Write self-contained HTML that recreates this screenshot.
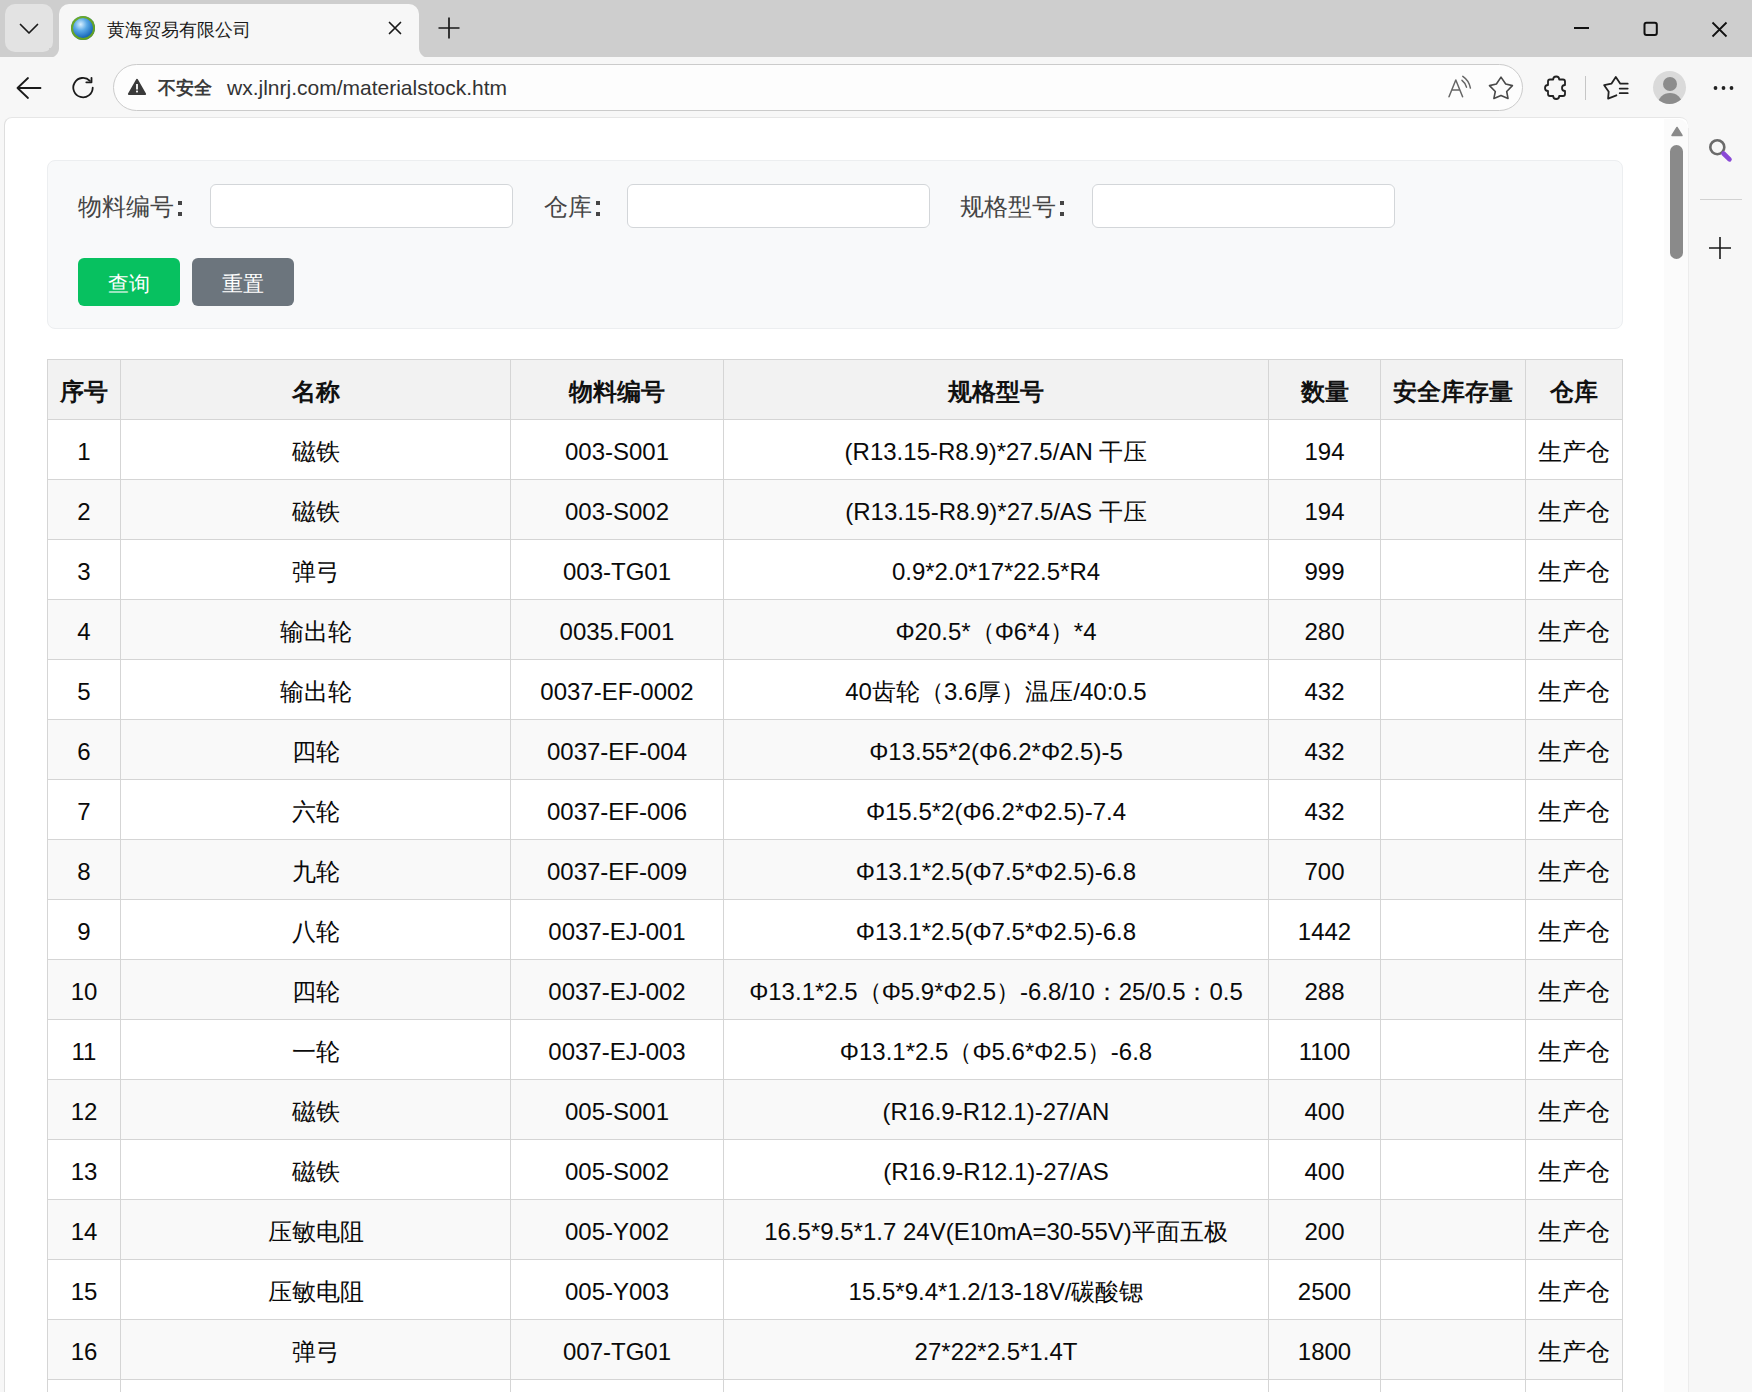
<!DOCTYPE html>
<html><head><meta charset="utf-8">
<style>
*{box-sizing:border-box;margin:0;padding:0}
html,body{width:1752px;height:1392px;overflow:hidden;background:#f7f7f7;font-family:"Liberation Sans",sans-serif;position:relative}
.abs{position:absolute}
#tabstrip{position:absolute;left:0;top:0;width:1752px;height:58px;background:#cecece}
#dd{position:absolute;left:5px;top:4px;width:48px;height:48px;border-radius:10px;background:#e3e3e3}
#tab{position:absolute;left:59px;top:4px;width:360px;height:54px;background:#f7f7f7;border-radius:10px 10px 0 0}
#tab:before,#tab:after{content:"";position:absolute;bottom:0;width:10px;height:10px}
#tab:before{left:-10px;background:radial-gradient(circle at 0 0,#cecece 9.5px,#f7f7f7 10.5px)}
#tab:after{right:-10px;background:radial-gradient(circle at 100% 0,#cecece 9.5px,#f7f7f7 10.5px)}
#favicon{position:absolute;left:71px;top:16px;width:24px;height:24px;border-radius:50%;background:radial-gradient(circle at 40% 35%,#d9f0ff 0,#5aa9e6 30%,#1565b8 65%,#0d3e7a 85%);box-shadow:inset 0 0 0 2px rgba(110,170,20,.9)}
#title{position:absolute;left:107px;top:18px;font-size:18px;color:#1b1b1b;white-space:nowrap;line-height:24px}
#toolbar{position:absolute;left:0;top:57px;width:1752px;height:61px;background:#f7f7f7}
#pill{position:absolute;left:113px;top:64px;width:1410px;height:47px;border-radius:24px;background:#fdfdfd;border:1px solid #cbcbcb}
#insec{position:absolute;left:158px;top:76px;font-size:18px;font-weight:bold;color:#3b3b3b;line-height:24px;white-space:nowrap}
#url{position:absolute;left:227px;top:76px;font-size:21px;color:#333;line-height:24px;white-space:nowrap}
#content{position:absolute;left:4px;top:117px;width:1684px;height:1300px;background:#fff;border-top-left-radius:8px;border-top-right-radius:8px;border-left:1px solid #dedede;border-top:1px solid #e6e6e6}
#sidebar{position:absolute;left:1688px;top:128px;width:64px;height:1274px;background:#f7f7f7;border-left:1px solid #ececec}
#filter{position:absolute;left:47px;top:160px;width:1576px;height:169px;background:#f8f9fa;border:1px solid #eceef0;border-radius:8px}
.lbl{position:absolute;top:192px;font-size:24px;color:#454545;line-height:30px;white-space:nowrap}
.inp{position:absolute;top:184px;width:303px;height:44px;background:#fff;border:1px solid #d3d6d9;border-radius:6px}
.btn{position:absolute;top:258px;width:102px;height:48px;border-radius:6px;color:#fff;font-size:21px;text-align:center;line-height:51px}
.bg{position:absolute}
.dot{position:absolute;top:201px;width:4px;height:15px;background:linear-gradient(#454545 0,#454545 4px,transparent 4px,transparent 11px,#454545 11px)}
.hl{position:absolute;height:1px;background:#d5d5d5}
.vl{position:absolute;width:1px;background:#d5d5d5}
.c{position:absolute;height:60px;line-height:65px;text-align:center;font-size:24px;color:#0a0a0a;white-space:nowrap}
.th{font-weight:bold;color:#111;line-height:66px}
#scroll{position:absolute;left:1664px;top:119px;width:24px;height:1273px;background:#fbfbfb;border-top-right-radius:10px}
#thumb{position:absolute;left:1670px;top:145px;width:13px;height:114px;border-radius:7px;background:#8a8a8a}
</style></head><body>
<div id="tabstrip"></div>
<div id="dd"></div>
<div id="tab"></div>
<div id="favicon"></div>
<div id="title">黄海贸易有限公司</div>
<div id="toolbar"></div>
<div id="pill"></div>
<div id="insec">不安全</div>
<div id="url">wx.jlnrj.com/materialstock.htm</div>
<div class="abs" style="left:1585px;top:76px;width:1px;height:24px;background:#c6c6c6"></div>
<div class="abs" style="left:1653px;top:71px;width:33px;height:33px;border-radius:50%;background:#dadada;overflow:hidden"><div class="abs" style="left:9.5px;top:5.7px;width:14.5px;height:14.5px;border-radius:50%;background:#8c8c8c"></div><div class="abs" style="left:5px;top:21.7px;width:24px;height:22px;border-radius:50%;background:#8c8c8c"></div></div>
<svg class="abs" style="left:0;top:0;z-index:5" width="1752" height="130" viewBox="0 0 1752 130">
<g fill="none" stroke-linecap="round" stroke-linejoin="round">
<path d="M20.5 24.5 L29 33 L37.5 24.5" stroke="#1a1a1a" stroke-width="1.7"/>
<path d="M389.5 22.5 L400.5 33.5 M400.5 22.5 L389.5 33.5" stroke="#1a1a1a" stroke-width="1.7"/>
<path d="M449 17.5 V38.5 M438.5 28 H459.5" stroke="#1a1a1a" stroke-width="1.7" stroke-linecap="butt"/>
<path d="M1574 28 H1589" stroke="#111" stroke-width="2" stroke-linecap="butt"/>
<rect x="1644.5" y="22.7" width="12.3" height="12.3" rx="2" stroke="#111" stroke-width="2"/>
<path d="M1712.5 22.5 L1726.5 36.5 M1726.5 22.5 L1712.5 36.5" stroke="#111" stroke-width="1.8" stroke-linecap="butt"/>
<path d="M28 78 L17.5 88 L28 98 M17.5 88 H40.5" stroke="#1a1a1a" stroke-width="1.8"/>
<path d="M92.7 87.7 A9.7 9.7 0 1 1 89.9 80.8" stroke="#1a1a1a" stroke-width="1.8"/>
<path d="M86.3 82.3 H91.5 V77.8" stroke="#1a1a1a" stroke-width="1.8"/>
<path d="M1449 96.8 L1455.8 80 L1462.6 96.8 M1451.8 90.1 H1459.8" stroke="#666" stroke-width="1.5"/>
<path d="M1462 80.3 Q1465.5 83 1466.5 87.2 M1462.8 76.4 Q1469 80.5 1470.4 88.1" stroke="#666" stroke-width="1.5"/>
<path d="M1501 77.1 L1505.7 84 L1512.4 85.6 L1506.7 91.5 L1508 98.4 L1501 95.4 L1493.9 98.4 L1495.3 91.5 L1489.5 85.6 L1496.4 84 Z" stroke="#4a4a4a" stroke-width="1.6"/>
<path d="M1550 79.5 H1553.2 A3 3 0 0 1 1559.2 79.5 H1563 Q1565 79.5 1565 81.5 V85 A3 3 0 0 0 1565 91 V94 Q1565 96 1563 96 H1559.2 A3 3 0 0 1 1553.2 96 H1550 Q1548 96 1548 94 V91 A3 3 0 0 1 1548 85 V81.5 Q1548 79.5 1550 79.5 Z" stroke="#222" stroke-width="1.8"/>
<path d="M1627.7 83.7 H1620.3 L1615.8 76.9 L1611.4 83.7 L1604.2 85.2 L1608.7 91.7 L1608.1 98.6 L1616.4 95.3 M1619.7 88.6 H1627.7 M1619.7 93.2 H1627.7" stroke="#222" stroke-width="1.8"/>
<circle cx="1715.5" cy="88" r="1.9" fill="#222" stroke="none"/><circle cx="1723.5" cy="88" r="1.9" fill="#222" stroke="none"/><circle cx="1731.5" cy="88" r="1.9" fill="#222" stroke="none"/>
</g>
<path d="M129 94 L137 80 L145 94 Z" fill="#3a3a3a" stroke="#3a3a3a" stroke-width="2.2" stroke-linejoin="round"/>
<rect x="136.1" y="84" width="1.8" height="5.5" fill="#fff"/><rect x="136.1" y="90.6" width="1.8" height="1.8" fill="#fff"/>
</svg>
<div id="content"></div>
<div id="sidebar"></div>
<svg class="abs" style="left:1700px;top:130px" width="40" height="40" viewBox="1700 130 40 40"><circle cx="1717.3" cy="147.2" r="7" fill="none" stroke="#6b6b6b" stroke-width="2.6"/><path d="M1723.5 153.5 L1729.5 159.3" stroke="#8a4ad6" stroke-width="4.6" stroke-linecap="round"/></svg>
<div class="abs" style="left:1700px;top:199px;width:42px;height:1px;background:#d2d2d2"></div>
<svg class="abs" style="left:1706px;top:234px" width="28" height="28" viewBox="0 0 28 28"><path d="M14 3 V25 M3 14 H25" stroke="#1a1a1a" stroke-width="1.6"/></svg>

<div id="filter"></div>
<div class="lbl" style="left:78px">物料编号</div><div class="dot" style="left:178px"></div>
<div class="inp" style="left:210px"></div>
<div class="lbl" style="left:544px">仓库</div><div class="dot" style="left:596px"></div>
<div class="inp" style="left:627px"></div>
<div class="lbl" style="left:960px">规格型号</div><div class="dot" style="left:1060px"></div>
<div class="inp" style="left:1092px"></div>
<div class="btn" style="left:78px;background:#07c160">查询</div>
<div class="btn" style="left:192px;background:#6c757d">重置</div>

<div class="bg" style="left:47px;top:359px;width:1575px;height:60px;background:#f2f2f2"></div>
<div class="bg" style="left:47px;top:419px;width:1575px;height:60px;background:#fff"></div>
<div class="bg" style="left:47px;top:479px;width:1575px;height:60px;background:#f9f9f9"></div>
<div class="bg" style="left:47px;top:539px;width:1575px;height:60px;background:#fff"></div>
<div class="bg" style="left:47px;top:599px;width:1575px;height:60px;background:#f9f9f9"></div>
<div class="bg" style="left:47px;top:659px;width:1575px;height:60px;background:#fff"></div>
<div class="bg" style="left:47px;top:719px;width:1575px;height:60px;background:#f9f9f9"></div>
<div class="bg" style="left:47px;top:779px;width:1575px;height:60px;background:#fff"></div>
<div class="bg" style="left:47px;top:839px;width:1575px;height:60px;background:#f9f9f9"></div>
<div class="bg" style="left:47px;top:899px;width:1575px;height:60px;background:#fff"></div>
<div class="bg" style="left:47px;top:959px;width:1575px;height:60px;background:#f9f9f9"></div>
<div class="bg" style="left:47px;top:1019px;width:1575px;height:60px;background:#fff"></div>
<div class="bg" style="left:47px;top:1079px;width:1575px;height:60px;background:#f9f9f9"></div>
<div class="bg" style="left:47px;top:1139px;width:1575px;height:60px;background:#fff"></div>
<div class="bg" style="left:47px;top:1199px;width:1575px;height:60px;background:#f9f9f9"></div>
<div class="bg" style="left:47px;top:1259px;width:1575px;height:60px;background:#fff"></div>
<div class="bg" style="left:47px;top:1319px;width:1575px;height:60px;background:#f9f9f9"></div>
<div class="bg" style="left:47px;top:1379px;width:1575px;height:60px;background:#fff"></div>
<div class="hl" style="top:359px;left:47px;width:1576px"></div>
<div class="hl" style="top:419px;left:47px;width:1576px"></div>
<div class="hl" style="top:479px;left:47px;width:1576px"></div>
<div class="hl" style="top:539px;left:47px;width:1576px"></div>
<div class="hl" style="top:599px;left:47px;width:1576px"></div>
<div class="hl" style="top:659px;left:47px;width:1576px"></div>
<div class="hl" style="top:719px;left:47px;width:1576px"></div>
<div class="hl" style="top:779px;left:47px;width:1576px"></div>
<div class="hl" style="top:839px;left:47px;width:1576px"></div>
<div class="hl" style="top:899px;left:47px;width:1576px"></div>
<div class="hl" style="top:959px;left:47px;width:1576px"></div>
<div class="hl" style="top:1019px;left:47px;width:1576px"></div>
<div class="hl" style="top:1079px;left:47px;width:1576px"></div>
<div class="hl" style="top:1139px;left:47px;width:1576px"></div>
<div class="hl" style="top:1199px;left:47px;width:1576px"></div>
<div class="hl" style="top:1259px;left:47px;width:1576px"></div>
<div class="hl" style="top:1319px;left:47px;width:1576px"></div>
<div class="hl" style="top:1379px;left:47px;width:1576px"></div>
<div class="vl" style="left:47px;top:359px;height:1033px"></div>
<div class="vl" style="left:120px;top:359px;height:1033px"></div>
<div class="vl" style="left:510px;top:359px;height:1033px"></div>
<div class="vl" style="left:723px;top:359px;height:1033px"></div>
<div class="vl" style="left:1268px;top:359px;height:1033px"></div>
<div class="vl" style="left:1380px;top:359px;height:1033px"></div>
<div class="vl" style="left:1525px;top:359px;height:1033px"></div>
<div class="vl" style="left:1622px;top:359px;height:1033px"></div>
<div class="c th" style="left:48px;top:359px;width:72px">序号</div>
<div class="c th" style="left:121px;top:359px;width:389px">名称</div>
<div class="c th" style="left:511px;top:359px;width:212px">物料编号</div>
<div class="c th" style="left:724px;top:359px;width:544px">规格型号</div>
<div class="c th" style="left:1269px;top:359px;width:111px">数量</div>
<div class="c th" style="left:1381px;top:359px;width:144px">安全库存量</div>
<div class="c th" style="left:1526px;top:359px;width:96px">仓库</div>
<div class="c" style="left:48px;top:419px;width:72px">1</div>
<div class="c" style="left:121px;top:419px;width:389px">磁铁</div>
<div class="c" style="left:511px;top:419px;width:212px">003-S001</div>
<div class="c" style="left:724px;top:419px;width:544px">(R13.15-R8.9)*27.5/AN 干压</div>
<div class="c" style="left:1269px;top:419px;width:111px">194</div>
<div class="c" style="left:1526px;top:419px;width:96px">生产仓</div>
<div class="c" style="left:48px;top:479px;width:72px">2</div>
<div class="c" style="left:121px;top:479px;width:389px">磁铁</div>
<div class="c" style="left:511px;top:479px;width:212px">003-S002</div>
<div class="c" style="left:724px;top:479px;width:544px">(R13.15-R8.9)*27.5/AS 干压</div>
<div class="c" style="left:1269px;top:479px;width:111px">194</div>
<div class="c" style="left:1526px;top:479px;width:96px">生产仓</div>
<div class="c" style="left:48px;top:539px;width:72px">3</div>
<div class="c" style="left:121px;top:539px;width:389px">弹弓</div>
<div class="c" style="left:511px;top:539px;width:212px">003-TG01</div>
<div class="c" style="left:724px;top:539px;width:544px">0.9*2.0*17*22.5*R4</div>
<div class="c" style="left:1269px;top:539px;width:111px">999</div>
<div class="c" style="left:1526px;top:539px;width:96px">生产仓</div>
<div class="c" style="left:48px;top:599px;width:72px">4</div>
<div class="c" style="left:121px;top:599px;width:389px">输出轮</div>
<div class="c" style="left:511px;top:599px;width:212px">0035.F001</div>
<div class="c" style="left:724px;top:599px;width:544px">Φ20.5*（Φ6*4）*4</div>
<div class="c" style="left:1269px;top:599px;width:111px">280</div>
<div class="c" style="left:1526px;top:599px;width:96px">生产仓</div>
<div class="c" style="left:48px;top:659px;width:72px">5</div>
<div class="c" style="left:121px;top:659px;width:389px">输出轮</div>
<div class="c" style="left:511px;top:659px;width:212px">0037-EF-0002</div>
<div class="c" style="left:724px;top:659px;width:544px">40齿轮（3.6厚）温压/40:0.5</div>
<div class="c" style="left:1269px;top:659px;width:111px">432</div>
<div class="c" style="left:1526px;top:659px;width:96px">生产仓</div>
<div class="c" style="left:48px;top:719px;width:72px">6</div>
<div class="c" style="left:121px;top:719px;width:389px">四轮</div>
<div class="c" style="left:511px;top:719px;width:212px">0037-EF-004</div>
<div class="c" style="left:724px;top:719px;width:544px">Φ13.55*2(Φ6.2*Φ2.5)-5</div>
<div class="c" style="left:1269px;top:719px;width:111px">432</div>
<div class="c" style="left:1526px;top:719px;width:96px">生产仓</div>
<div class="c" style="left:48px;top:779px;width:72px">7</div>
<div class="c" style="left:121px;top:779px;width:389px">六轮</div>
<div class="c" style="left:511px;top:779px;width:212px">0037-EF-006</div>
<div class="c" style="left:724px;top:779px;width:544px">Φ15.5*2(Φ6.2*Φ2.5)-7.4</div>
<div class="c" style="left:1269px;top:779px;width:111px">432</div>
<div class="c" style="left:1526px;top:779px;width:96px">生产仓</div>
<div class="c" style="left:48px;top:839px;width:72px">8</div>
<div class="c" style="left:121px;top:839px;width:389px">九轮</div>
<div class="c" style="left:511px;top:839px;width:212px">0037-EF-009</div>
<div class="c" style="left:724px;top:839px;width:544px">Φ13.1*2.5(Φ7.5*Φ2.5)-6.8</div>
<div class="c" style="left:1269px;top:839px;width:111px">700</div>
<div class="c" style="left:1526px;top:839px;width:96px">生产仓</div>
<div class="c" style="left:48px;top:899px;width:72px">9</div>
<div class="c" style="left:121px;top:899px;width:389px">八轮</div>
<div class="c" style="left:511px;top:899px;width:212px">0037-EJ-001</div>
<div class="c" style="left:724px;top:899px;width:544px">Φ13.1*2.5(Φ7.5*Φ2.5)-6.8</div>
<div class="c" style="left:1269px;top:899px;width:111px">1442</div>
<div class="c" style="left:1526px;top:899px;width:96px">生产仓</div>
<div class="c" style="left:48px;top:959px;width:72px">10</div>
<div class="c" style="left:121px;top:959px;width:389px">四轮</div>
<div class="c" style="left:511px;top:959px;width:212px">0037-EJ-002</div>
<div class="c" style="left:724px;top:959px;width:544px">Φ13.1*2.5（Φ5.9*Φ2.5）-6.8/10：25/0.5：0.5</div>
<div class="c" style="left:1269px;top:959px;width:111px">288</div>
<div class="c" style="left:1526px;top:959px;width:96px">生产仓</div>
<div class="c" style="left:48px;top:1019px;width:72px">11</div>
<div class="c" style="left:121px;top:1019px;width:389px">一轮</div>
<div class="c" style="left:511px;top:1019px;width:212px">0037-EJ-003</div>
<div class="c" style="left:724px;top:1019px;width:544px">Φ13.1*2.5（Φ5.6*Φ2.5）-6.8</div>
<div class="c" style="left:1269px;top:1019px;width:111px">1100</div>
<div class="c" style="left:1526px;top:1019px;width:96px">生产仓</div>
<div class="c" style="left:48px;top:1079px;width:72px">12</div>
<div class="c" style="left:121px;top:1079px;width:389px">磁铁</div>
<div class="c" style="left:511px;top:1079px;width:212px">005-S001</div>
<div class="c" style="left:724px;top:1079px;width:544px">(R16.9-R12.1)-27/AN</div>
<div class="c" style="left:1269px;top:1079px;width:111px">400</div>
<div class="c" style="left:1526px;top:1079px;width:96px">生产仓</div>
<div class="c" style="left:48px;top:1139px;width:72px">13</div>
<div class="c" style="left:121px;top:1139px;width:389px">磁铁</div>
<div class="c" style="left:511px;top:1139px;width:212px">005-S002</div>
<div class="c" style="left:724px;top:1139px;width:544px">(R16.9-R12.1)-27/AS</div>
<div class="c" style="left:1269px;top:1139px;width:111px">400</div>
<div class="c" style="left:1526px;top:1139px;width:96px">生产仓</div>
<div class="c" style="left:48px;top:1199px;width:72px">14</div>
<div class="c" style="left:121px;top:1199px;width:389px">压敏电阻</div>
<div class="c" style="left:511px;top:1199px;width:212px">005-Y002</div>
<div class="c" style="left:724px;top:1199px;width:544px">16.5*9.5*1.7 24V(E10mA=30-55V)平面五极</div>
<div class="c" style="left:1269px;top:1199px;width:111px">200</div>
<div class="c" style="left:1526px;top:1199px;width:96px">生产仓</div>
<div class="c" style="left:48px;top:1259px;width:72px">15</div>
<div class="c" style="left:121px;top:1259px;width:389px">压敏电阻</div>
<div class="c" style="left:511px;top:1259px;width:212px">005-Y003</div>
<div class="c" style="left:724px;top:1259px;width:544px">15.5*9.4*1.2/13-18V/碳酸锶</div>
<div class="c" style="left:1269px;top:1259px;width:111px">2500</div>
<div class="c" style="left:1526px;top:1259px;width:96px">生产仓</div>
<div class="c" style="left:48px;top:1319px;width:72px">16</div>
<div class="c" style="left:121px;top:1319px;width:389px">弹弓</div>
<div class="c" style="left:511px;top:1319px;width:212px">007-TG01</div>
<div class="c" style="left:724px;top:1319px;width:544px">27*22*2.5*1.4T</div>
<div class="c" style="left:1269px;top:1319px;width:111px">1800</div>
<div class="c" style="left:1526px;top:1319px;width:96px">生产仓</div>
<div class="c" style="left:48px;top:1379px;width:72px">17</div>

<div id="scroll"></div>
<svg class="abs" style="left:1669px;top:125px" width="16" height="12" viewBox="0 0 16 12"><path d="M8 2.5 L13 10.5 H3 Z" fill="#8a8a8a" stroke="#8a8a8a" stroke-width="1.5" stroke-linejoin="round"/></svg>
<div id="thumb"></div>
</body></html>
